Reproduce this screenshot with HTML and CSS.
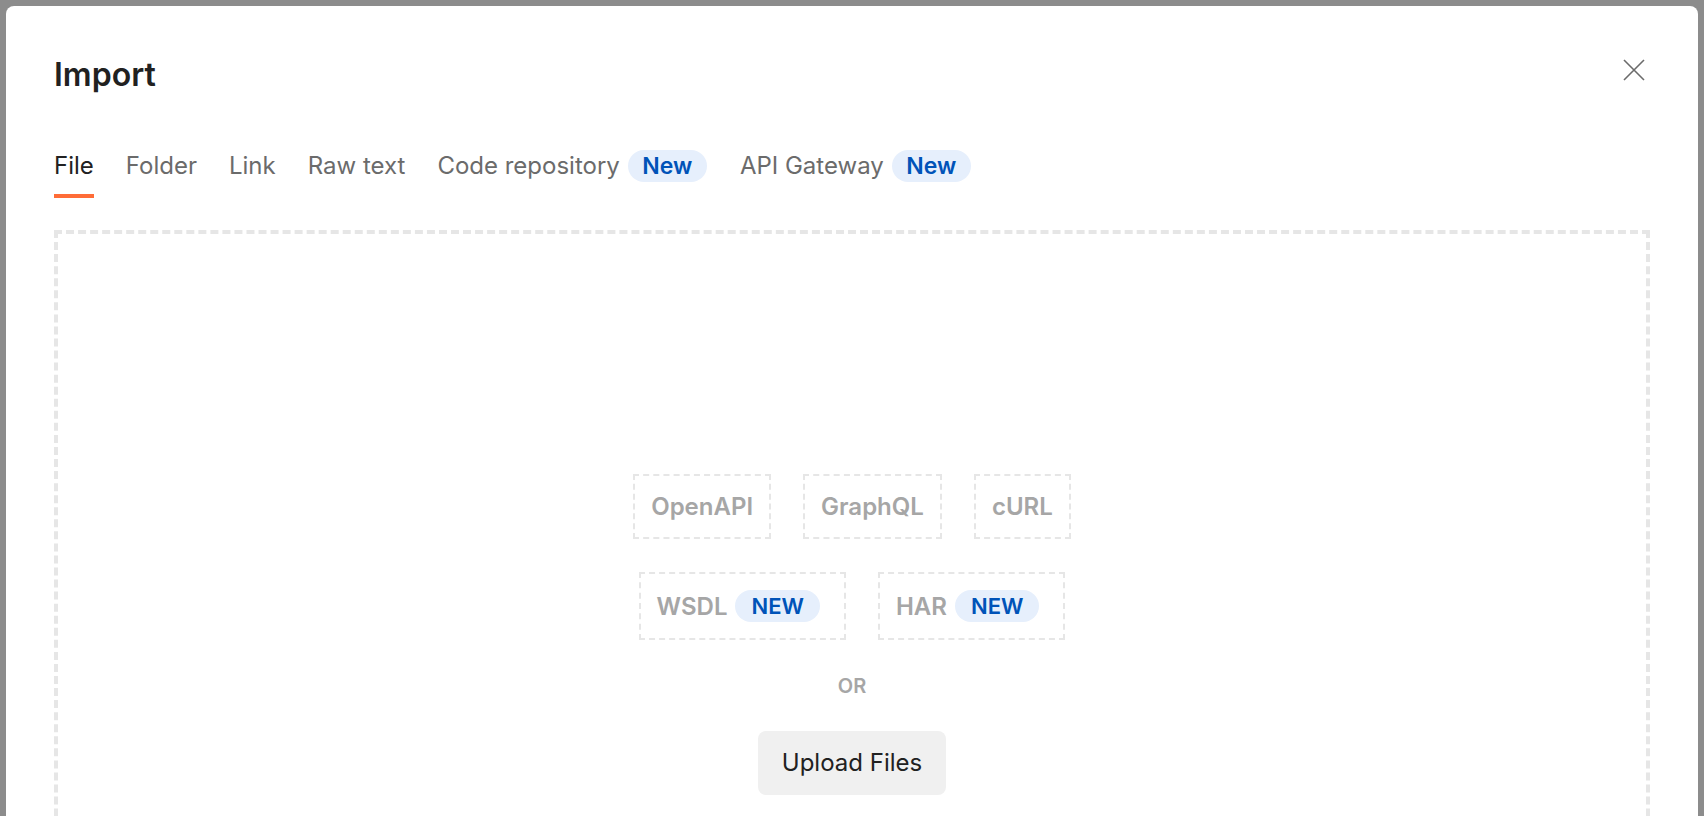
FILE: index.html
```html
<!DOCTYPE html>
<html lang="en">
<head>
<meta charset="utf-8">
<title>Import</title>
<link rel="stylesheet" href="styles.css">
</head>
<body>
<div class="backdrop">
  <div class="modal">
    <div class="header">
      <h1 class="title">Import</h1>
      <button class="close" aria-label="Close">
        <svg width="24" height="24" viewBox="0 0 24 24"><path d="M2 2 L22 22 M22 2 L2 22" stroke="#6b6b6b" stroke-width="1.6" fill="none"/></svg>
      </button>
    </div>
    <div class="tabs">
      <div class="tab active">File</div>
      <div class="tab">Folder</div>
      <div class="tab">Link</div>
      <div class="tab">Raw text</div>
      <div class="tab">Code repository <span class="badge">New</span></div>
      <div class="tab">API Gateway <span class="badge">New</span></div>
    </div>
    <div class="dropzone">
      <div class="chip-row">
        <div class="chip">OpenAPI</div>
        <div class="chip">GraphQL</div>
        <div class="chip">cURL</div>
      </div>
      <div class="chip-row">
        <div class="chip chip-new">WSDL <span class="badge badge-caps">NEW</span></div>
        <div class="chip chip-new">HAR <span class="badge badge-caps">NEW</span></div>
      </div>
      <div class="or">OR</div>
      <button class="upload">Upload Files</button>
    </div>
  </div>
</div>
</body>
</html>
```

FILE: styles.css
```css
* { box-sizing: border-box; }
html, body {
  margin: 0;
  padding: 0;
  height: 816px;
  overflow: hidden;
  background: #8c8c8c;
  font-family: Inter, "Noto Sans", "Liberation Sans", sans-serif;
}
.backdrop {
  padding: 6px 6px 0 6px;
  height: 816px;
}
.modal {
  background: #ffffff;
  border-radius: 8px 8px 0 0;
  height: 1000px;
  padding: 49px 48px 0 48px;
}
.header {
  display: flex;
  justify-content: space-between;
  align-items: flex-start;
}
.title {
  margin: 0;
  font-size: 32px;
  line-height: 40px;
  font-weight: 600;
  color: #212121;
}
.close {
  border: 0;
  background: none;
  padding: 0;
  margin: 3px 4px 0 0;
  width: 24px;
  height: 24px;
  display: block;
}
.close svg { display: block; }
.tabs {
  display: flex;
  gap: 32px;
  margin-top: 55px;
}
.tab {
  display: flex;
  align-items: center;
  gap: 8px;
  font-size: 24px;
  line-height: 32px;
  color: #6b6b6b;
  padding-bottom: 12px;
  border-bottom: 4px solid transparent;
}
.tab + .tab .badge { margin-right: 1px; }
.tab.active {
  color: #212121;
  border-bottom-color: #ff6c37;
}
.badge {
  display: inline-block;
  background: #e6effc;
  color: #0053b8;
  font-weight: 600;
  font-size: 23px;
  line-height: 32px;
  height: 32px;
  padding: 0 14.5px;
  border-radius: 16px;
}
.dropzone {
  margin-top: 32px;
  border: 4px dashed #e6e6e6;
  height: 900px;
  padding-top: 240px;
  display: flex;
  flex-direction: column;
  align-items: center;
}
.chip-row {
  display: flex;
  gap: 32px;
  margin-bottom: 33px;
}
.chip {
  display: flex;
  align-items: center;
  gap: 8px;
  border: 2px dashed #e6e6e6;
  padding: 16px;
  font-size: 24px;
  line-height: 29px;
  font-weight: 600;
  color: #a6a6a6;
}
.chip-new { padding: 16px 24px 16px 16px; }
.chip-new .badge-caps { font-size: 22px; padding: 0 16px; margin-right: 0; }
.or {
  margin-top: 1px;
  font-size: 20px;
  line-height: 24px;
  font-weight: 600;
  color: #a6a6a6;
}
.upload {
  margin-top: 33px;
  border: 0;
  background: #f0f0f0;
  border-radius: 8px;
  padding: 16px 24px;
  font-family: inherit;
  font-size: 24px;
  line-height: 32px;
  color: #212121;
}
```
